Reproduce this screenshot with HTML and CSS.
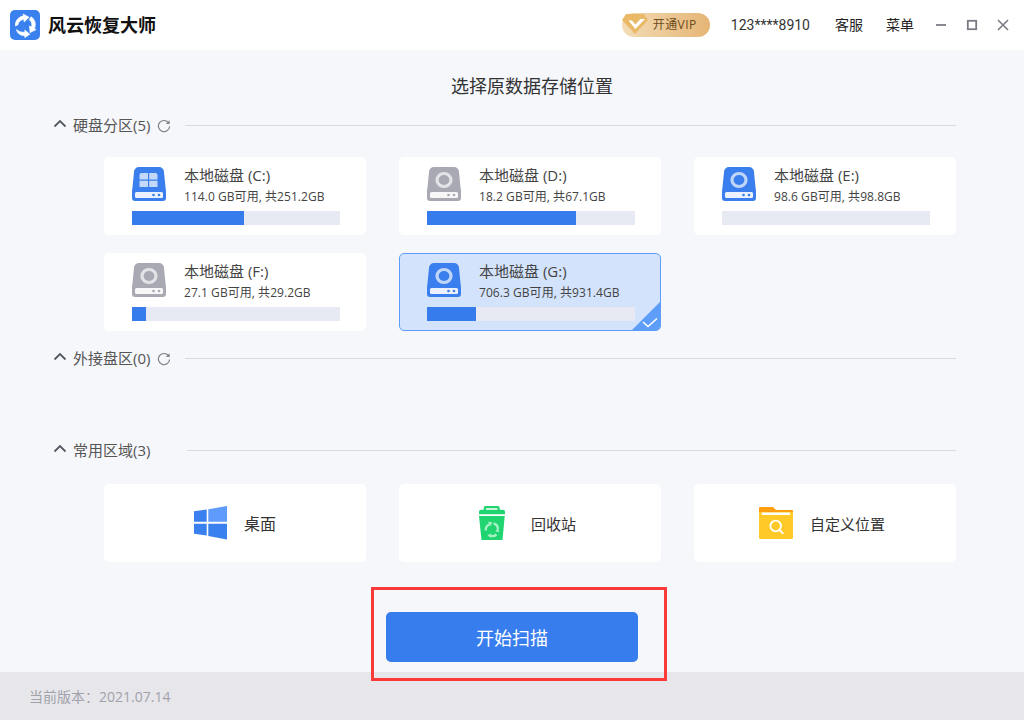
FILE: index.html
```html
<!DOCTYPE html>
<html lang="zh-CN">
<head>
<meta charset="utf-8">
<title>风云恢复大师</title>
<link rel="stylesheet" href="styles.css">
</head>
<body>
<svg class="defs" width="0" height="0" aria-hidden="true">
  <defs>
    <symbol id="chev" viewBox="0 0 14 9"><path d="M1.500 7.500 7 2l5.500 5.500" fill="none" stroke="#555a62" stroke-width="1.800"/></symbol>
    <symbol id="refresh" viewBox="0 0 14 14"><path d="M11.800 4.200A5.600 5.600 0 1 0 12.600 7.500" fill="none" stroke="#7d8188" stroke-width="1.200"/><path d="M12.600 1.200v3.800H8.800z" fill="#7d8188"/></symbol>
    <symbol id="disk" viewBox="0 0 34 34"><path d="M7 0h20a5 5 0 0 1 5 5l2 20H0L2 5a5 5 0 0 1 5-5z" fill="currentColor"/><rect y="22" width="34" height="12" rx="3" fill="currentColor"/><rect x="3" y="25" width="28" height="6" rx="1.500" fill="#fff" opacity=".9"/><circle cx="21.500" cy="28" r="1.300" fill="currentColor"/><circle cx="27" cy="28" r="1.300" fill="currentColor"/></symbol>
    <symbol id="ring" viewBox="0 0 34 34"><ellipse cx="17" cy="13" rx="7" ry="6.500" fill="none" stroke="#fff" stroke-opacity=".68" stroke-width="3.200"/></symbol>
  </defs>
</svg>
<div class="app">
  <header class="topbar">
    <div class="brand">
      <svg class="logo" viewBox="0 0 30 30"><rect width="30" height="30" rx="5" fill="#3a80ee"/><g fill="#fff" stroke="#fff" stroke-width=".7" stroke-linejoin="round"><path d="M5.500 16C4.800 10.500 9 6.500 13.500 6l-.5-2 6 3.200-4.800 4.800-.3-2.400c-3-.2-5.500 2.200-5.800 5z"/><path d="M21 6.800c4 2.500 5.500 7.500 3.300 12l1.800.8-6 3-.6-6.500 2 1c1-2.800 0-5.700-2.200-7.300z"/><path d="M6.500 19.500c1.500 1 3 3 8.500 2.800l-.2-2.300 5 4.200-5 3.300-.1-2c-4 .3-7.500-2-8.200-6z"/></g></svg>
      <span class="brand-name">风云恢复大师</span>
    </div>
    <div class="top-actions">
      <div class="vip">
        <svg class="vip-gem" viewBox="0 0 26 20"><path d="M4 0h18l4 6-13 14L0 6z" fill="#eab968"/><path d="M6.500 6.500h3.500L13.300 10.500 18.500 5h4.500L13.300 15z" fill="#fff"/></svg>
        <span class="vip-text">开通VIP</span>
      </div>
      <span class="phone">123****8910</span>
      <span class="link">客服</span>
      <span class="link">菜单</span>
      <div class="win-btns">
        <svg class="win" viewBox="0 0 12 12"><path d="M1 6h10" stroke="#7b7b85" stroke-width="1.800"/></svg>
        <svg class="win" viewBox="0 0 12 12"><rect x="1.800" y="1.800" width="8.400" height="8.400" fill="none" stroke="#7b7b85" stroke-width="1.800"/></svg>
        <svg class="win" viewBox="0 0 12 12"><path d="M1 1l10 10M11 1 1 11" stroke="#7b7b85" stroke-width="1.600"/></svg>
      </div>
    </div>
  </header>

  <main class="content">
    <h1 class="title">选择原数据存储位置</h1>

    <section class="sec sec-disks">
      <div class="sec-head">
        <svg class="chev"><use href="#chev"/></svg>
        <span class="sec-name">硬盘分区(5)</span>
        <svg class="refresh"><use href="#refresh"/></svg>
        <span class="rule"></span>
      </div>
      <div class="grid">
        <div class="card">
          <div class="card-top">
            <svg class="disk blue"><use href="#disk"/><path d="M7.500 8a2 2 0 0 1 2-2h6.500v6.500H7.500zM17.200 6h6.300a2 2 0 0 1 2 2v4.500h-8.300zM7.500 13.700H16V20H7.500zM17.200 13.700h8.300V20h-8.300z" fill="#fff" opacity=".7"/></svg>
            <div class="info"><div class="d-name">本地磁盘 (C:)</div><div class="d-size">114.0 GB可用, 共251.2GB</div></div>
          </div>
          <div class="bar"><div class="fill" style="width:112px"></div></div>
        </div>
        <div class="card">
          <div class="card-top">
            <svg class="disk gray"><use href="#disk"/><use href="#ring"/></svg>
            <div class="info"><div class="d-name">本地磁盘 (D:)</div><div class="d-size">18.2 GB可用, 共67.1GB</div></div>
          </div>
          <div class="bar"><div class="fill" style="width:149px"></div></div>
        </div>
        <div class="card">
          <div class="card-top">
            <svg class="disk blue"><use href="#disk"/><use href="#ring"/></svg>
            <div class="info"><div class="d-name">本地磁盘 (E:)</div><div class="d-size">98.6 GB可用, 共98.8GB</div></div>
          </div>
          <div class="bar"></div>
        </div>
        <div class="card">
          <div class="card-top">
            <svg class="disk gray"><use href="#disk"/><use href="#ring"/></svg>
            <div class="info"><div class="d-name">本地磁盘 (F:)</div><div class="d-size">27.1 GB可用, 共29.2GB</div></div>
          </div>
          <div class="bar"><div class="fill" style="width:14px"></div></div>
        </div>
        <div class="card selected">
          <div class="card-top">
            <svg class="disk blue"><use href="#disk"/><use href="#ring"/></svg>
            <div class="info"><div class="d-name">本地磁盘 (G:)</div><div class="d-size">706.3 GB可用, 共931.4GB</div></div>
          </div>
          <div class="bar"><div class="fill" style="width:49px"></div></div>
          <svg class="tick" viewBox="0 0 30 30"><path d="M30 0v26a4 4 0 0 1-4 4H0z" fill="#5f9ef8"/><path d="M12 21l5 4.500 9-8" fill="none" stroke="#fff" stroke-width="1.500"/></svg>
        </div>
      </div>
    </section>

    <section class="sec sec-ext">
      <div class="sec-head">
        <svg class="chev"><use href="#chev"/></svg>
        <span class="sec-name">外接盘区(0)</span>
        <svg class="refresh"><use href="#refresh"/></svg>
        <span class="rule"></span>
      </div>
    </section>

    <section class="sec sec-common">
      <div class="sec-head">
        <svg class="chev"><use href="#chev"/></svg>
        <span class="sec-name">常用区域(3)</span>
        <span class="rule rule-wide"></span>
      </div>
      <div class="grid grid-places">
        <div class="card place place-win">
          <svg class="win-logo" viewBox="0 0 33 34"><path d="M0 5.200 12.700 3.600V15.700H0z" fill="#3a80ee"/><path d="M14.300 3.300 33 0v15.700H14.300z" fill="#5f9bfa"/><path d="M0 17.700h12.700v11.900L0 27.800z" fill="#3a80ee"/><path d="M14.300 17.700H33V33.500l-18.700-3.600z" fill="#3a80ee"/></svg>
          <span class="place-name">桌面</span>
        </div>
        <div class="card place place-bin">
          <svg class="bin" viewBox="0 0 26 34"><path d="M4.700 3.700V2a2 2 0 0 1 2-2h12a2 2 0 0 1 2 2v1.700H24a2 2 0 0 1 2 2v2.600H0V5.700a2 2 0 0 1 2-2zM7 2.200v1.500h11.500V2.200z" fill="#20d46f" fill-rule="evenodd"/><path d="M0 10h25.700L23.500 34H2.500z" fill="#20d46f"/><path d="M6.800 24.500a6 6 0 0 1 3.500-6M14.500 17.500a6 6 0 0 1 4.500 5.500M17.500 28.500a6 6 0 0 1-6.500 1" fill="none" stroke="#a5f0c6" stroke-width="2.400"/><path d="M9 15.500l4.500 1-2.500 4zM20.500 26l-4 -.5 2-4zM11.500 32l-3-3 4-1.500z" fill="#a5f0c6"/></svg>
          <span class="place-name">回收站</span>
        </div>
        <div class="card place place-folder">
          <svg class="folder" viewBox="0 0 34 32"><path d="M1 0h13l3 3h16a1 1 0 0 1 1 1v4H0V1a1 1 0 0 1 1-1z" fill="#ff9f0f"/><path d="M0 5h34v25.500a1.500 1.500 0 0 1-1.500 1.500h-31A1.500 1.500 0 0 1 0 30.500z" fill="#ffc928"/><rect x="2.700" y="5.500" width="28.300" height="2.500" fill="#fff"/><circle cx="16.700" cy="19" r="5.300" fill="none" stroke="#fff" stroke-width="1.800"/><path d="M20.500 23l3.800 3.800" stroke="#fff" stroke-width="1.800"/></svg>
          <span class="place-name">自定义位置</span>
        </div>
      </div>
    </section>

    <div class="action">
      <button class="start" type="button">开始扫描</button>
    </div>
  </main>

  <footer class="foot">当前版本：2021.07.14</footer>
  <div class="annot"></div>
</div>
</body>
</html>
```
FILE: styles.css
```css
* { box-sizing: border-box; }
html, body { margin: 0; padding: 0; }
body {
  width: 1024px;
  height: 720px;
  overflow: hidden;
  font-family: "Open Sans", "Noto Sans CJK SC", sans-serif;
  color: #333;
  background: #f5f7fb;
}
.defs { position: absolute; }
.app {
  position: relative;
  width: 1024px;
  height: 720px;
  display: flex;
  flex-direction: column;
}
.topbar {
  height: 50px;
  flex: none;
  background: #fff;
  display: flex;
  align-items: center;
  justify-content: space-between;
  padding: 0 15px 0 10px;
}
.brand { display: flex; align-items: center; gap: 8px; }
.logo { width: 30px; height: 30px; display: block; }
.brand-name { font-size: 18px; font-weight: 700; color: #111; line-height: 30px; }
.top-actions { display: flex; align-items: center; }
.vip {
  position: relative;
  width: 88px;
  height: 24px;
  margin-right: 21px;
  background: linear-gradient(90deg, #f3dcb7, #e5b574);
  border-radius: 12px;
  display: flex;
  align-items: center;
  padding-left: 31px;
}
.vip-gem { position: absolute; left: 0; top: 1px; width: 26px; height: 20px; }
.vip-text { font-size: 12px; color: #6e4a1c; line-height: 24px; letter-spacing: .4px; white-space: nowrap; }
.phone { font-family: Roboto, "Noto Sans CJK SC", sans-serif; font-size: 14px; color: #333; margin-right: 25px; line-height: 20px; }
.link { font-size: 14px; color: #222; margin-right: 23px; line-height: 20px; }
.link:last-of-type { margin-right: 0; }
.win-btns { display: flex; align-items: center; gap: 19px; margin-left: 21px; }
.win { width: 12px; height: 12px; display: block; }

.content { flex: 1; min-height: 0; padding-top: 25px; display: flex; flex-direction: column; }
.title {
  margin: 0;
  padding-left: 40px;
  font-size: 18px;
  font-weight: 400;
  line-height: 22px;
  text-align: center;
  color: #333;
}
.sec { padding: 0 68px 0 53px; }
.sec-disks { margin-top: 17px; }
.sec-ext { margin-top: 16px; height: 92px; }
.sec-head { display: flex; align-items: center; height: 22px; }
.chev { width: 14px; height: 9px; flex: none; margin-right: 6px; margin-top: -3px; }
.sec-name { font-size: 15px; color: #555; line-height: 22px; white-space: nowrap; }
.refresh { width: 14px; height: 14px; flex: none; margin-left: 7px; margin-top: 2px; }
.rule { flex: 1; height: 1px; background: #d9d9de; margin-left: 14px; }
.rule-wide { margin-left: 37px; }

.grid {
  display: grid;
  grid-template-columns: repeat(3, 262px);
  grid-auto-rows: 78px;
  gap: 18px 33px;
  margin: 21px 0 0 51px;
}
.grid-places { margin-top: 23px; }
.card {
  position: relative;
  background: #fff;
  border-radius: 5px;
  padding: 10px 26px 0 28px;
  overflow: hidden;
}
.card-top { display: flex; align-items: flex-start; height: 44px; }
.disk { width: 34px; height: 34px; flex: none; display: block; overflow: visible; }
.blue { color: #3a7fed; }
.gray { color: #a9a9b3; }
.info { margin-left: 18px; margin-top: -1px; }
.d-name { font-size: 15px; line-height: 18px; color: #444; white-space: nowrap; }
.d-size { font-size: 12px; line-height: 18px; margin-top: 4px; color: #444; white-space: nowrap; letter-spacing: .05px; }
.bar { width: 208px; height: 14px; background: #e7eaf3; }
.fill { height: 14px; background: #367cec; }
.selected {
  background: #d3e3fb;
  border: 1px solid #5f9ef8;
  padding: 9px 25px 0 27px;
}
.tick { position: absolute; right: -1px; bottom: -1px; width: 30px; height: 30px; display: block; }

.place { display: flex; align-items: center; justify-content: center; padding: 0; }
.place-win { gap: 17px; }
.place-win .place-name { font-size: 16px; }
.place-bin { gap: 26px; padding-right: 5px; }
.place-folder { gap: 17px; padding-right: 6px; }
.win-logo { width: 33px; height: 34px; flex: none; display: block; }
.bin { width: 26px; height: 34px; flex: none; display: block; }
.folder { width: 34px; height: 32px; flex: none; display: block; }
.place-name { font-size: 15px; color: #333; line-height: 20px; margin-top: 2px; }

.action { display: flex; justify-content: center; margin-top: 50px; }
.start {
  width: 252px;
  height: 50px;
  border: 0;
  border-radius: 5px;
  background: #387ded;
  color: #fff;
  font-family: inherit;
  font-size: 18px;
  padding: 0;
}
.foot {
  height: 48px;
  flex: none;
  background: #e6e6eb;
  padding-left: 29px;
  font-size: 14px;
  line-height: 50px;
  color: #a2a2aa;
}
.annot {
  position: absolute;
  left: 371px;
  top: 587px;
  width: 296px;
  height: 94px;
  border: 3px solid #fb3a3a;
  pointer-events: none;
}
```
